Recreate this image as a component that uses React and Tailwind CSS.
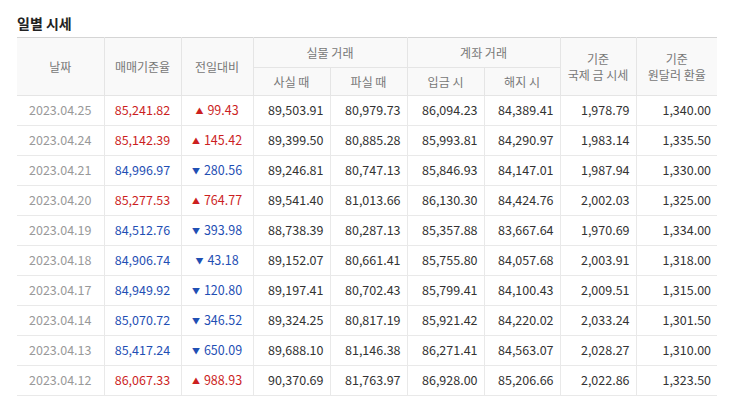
const rows = [
["2023.04.25","85,241.82","u","99.43","89,503.91","80,979.73","86,094.23","84,389.41","1,978.79","1,340.00"],
["2023.04.24","85,142.39","u","145.42","89,399.50","80,885.28","85,993.81","84,290.97","1,983.14","1,335.50"],
["2023.04.21","84,996.97","d","280.56","89,246.81","80,747.13","85,846.93","84,147.01","1,987.94","1,330.00"],
["2023.04.20","85,277.53","u","764.77","89,541.40","81,013.66","86,130.30","84,424.76","2,002.03","1,325.00"],
["2023.04.19","84,512.76","d","393.98","88,738.39","80,287.13","85,357.88","83,667.64","1,970.69","1,334.00"],
["2023.04.18","84,906.74","d","43.18","89,152.07","80,661.41","85,755.80","84,057.68","2,003.91","1,318.00"],
["2023.04.17","84,949.92","d","120.80","89,197.41","80,702.43","85,799.41","84,100.43","2,009.51","1,315.00"],
["2023.04.14","85,070.72","d","346.52","89,324.25","80,817.19","85,921.42","84,220.02","2,033.24","1,301.50"],
["2023.04.13","85,417.24","d","650.09","89,688.10","81,146.38","86,271.41","84,563.07","2,028.27","1,310.00"],
["2023.04.12","86,067.33","u","988.93","90,370.69","81,763.97","86,928.00","85,206.66","2,022.86","1,323.50"],
];
const widths=[87,77,72,77,77,77,76,76,81];
export default function App(){
  const f={fontFamily:'"Noto Sans CJK KR","Noto Sans",sans-serif'};
  const th="border-l border-b border-[#e5e5e5] bg-[#f9f9f9] text-[#777] font-normal text-[12px] leading-[16px]";
  const td="border-l border-b border-[#e9e9e9] h-[30px] text-[12.5px] text-right pr-[6px]";
  return(
    <div className="w-[738px] h-[405px] bg-white pl-[17px] pt-[13px]" style={f}>
      <div className="text-[14px] font-bold text-[#222] leading-[20px] mb-[4px]">일별 시세</div>
      <table className="border-collapse border-t border-[#d5d5d5] w-[700px] table-fixed">
        <colgroup>{widths.map((w,i)=><col key={i} style={{width:w}}/>)}</colgroup>
        <thead>
          <tr className="h-[30px]">
            <th rowSpan={2} className={th+" !border-l-0"}>날짜</th>
            <th rowSpan={2} className={th}>매매기준율</th>
            <th rowSpan={2} className={th}>전일대비</th>
            <th colSpan={2} className={th}>실물 거래</th>
            <th colSpan={2} className={th}>계좌 거래</th>
            <th rowSpan={2} className={th}>기준<br/>국제 금 시세</th>
            <th rowSpan={2} className={th}>기준<br/>원달러 환율</th>
          </tr>
          <tr className="h-[28px]">
            <th className={th}>사실 때</th><th className={th}>파실 때</th>
            <th className={th}>입금 시</th><th className={th}>해지 시</th>
          </tr>
        </thead>
        <tbody>
          {rows.map((r,i)=>{
            const up=r[2]==="u"; const c=up?"text-[#cc1f1f]":"text-[#1f4fb4]";
            return(<tr key={i}>
              <td className={td+" !border-l-0 !text-center !pr-0 text-[#999]"}>{r[0]}</td>
              <td className={td+" !text-center !pr-0 "+c}>{r[1]}</td>
              <td className={td+" !text-center !pr-0 "+c}><span className="text-[8px] mr-[4px] align-[1px]">{up?"▲":"▼"}</span>{r[3]}</td>
              {r.slice(4).map((v,j)=><td key={j} className={td+" text-[#333]"}>{v}</td>)}
            </tr>);
          })}
        </tbody>
      </table>
    </div>
  );
}
